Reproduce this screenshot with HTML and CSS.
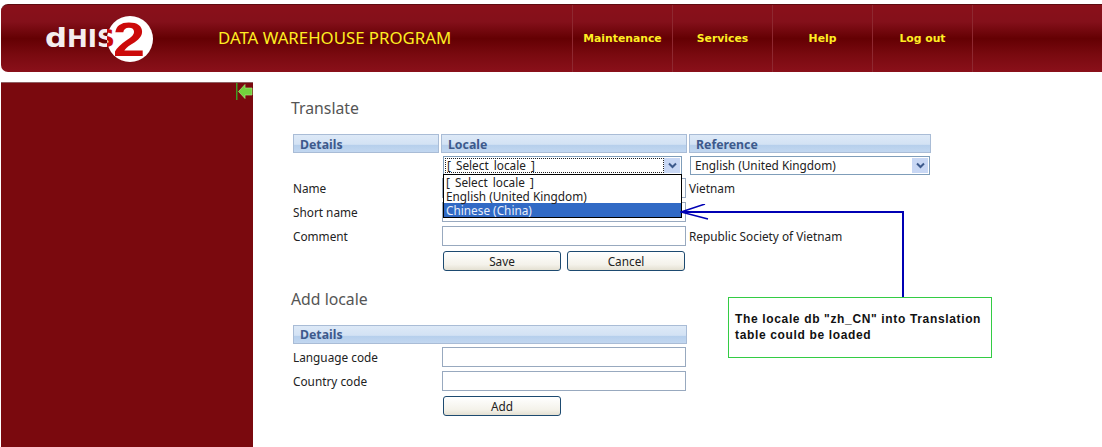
FILE: index.html
```html
<!DOCTYPE html>
<html>
<head>
<meta name="viewport" content="width=device-width, initial-scale=1">
<link rel="stylesheet" href="styles.css">
</head>
<body>

<div class="header">
  <svg class="logo" width="120" height="50" viewBox="0 0 120 50">
    <defs>
      <linearGradient id="sCut" gradientUnits="userSpaceOnUse" x1="50" y1="0" x2="72" y2="0">
        <stop offset="0.55" stop-color="#f4eeee"/>
        <stop offset="0.55" stop-color="#cc0a0a"/>
      </linearGradient>
    </defs>
    <circle cx="85" cy="25" r="23" fill="#fff"/>
    <text x="0" y="33" class="logo-d" textLength="22" lengthAdjust="spacingAndGlyphs">d</text>
    <text x="22" y="33" class="logo-his" textLength="48" lengthAdjust="spacingAndGlyphs">HI<tspan fill="url(#sCut)">S</tspan></text>
    <text x="68" y="42" class="logo-two" textLength="32" lengthAdjust="spacingAndGlyphs">2</text>
  </svg>
  <div class="app-title">DATA WAREHOUSE PROGRAM</div>
  <div class="menu">
    <a class="menu-item">Maintenance</a>
    <a class="menu-item">Services</a>
    <a class="menu-item">Help</a>
    <a class="menu-item">Log out</a>
    <span class="menu-rest"></span>
  </div>
</div>

<div class="page">
  <div class="sidebar">
    <svg class="hide-arrow" width="17" height="17" viewBox="0 0 17 17">
      <rect x="0" y="0" width="1.500" height="17" fill="#3f9a22"/>
      <path d="M2.500 8.500 L9 1.500 V5 H16 V12 H9 V15.500 Z" fill="#72d23c" stroke="#a4e67c" stroke-width="0.7"/>
    </svg>
  </div>

  <div class="main">
    <h3 class="heading">Translate</h3>
    <div class="form-grid">
      <div class="section-head">Details</div>
      <div class="section-head">Locale</div>
      <div class="section-head">Reference</div>

      <div></div>
      <div class="select select-focus">
        <span class="select-value wide-words">[ Select locale ]</span>
        <span class="select-btn"><svg width="9" height="7" viewBox="0 0 9 7"><path d="M1 1.500 L4.500 5 L8 1.500" fill="none" stroke="#3d5a8c" stroke-width="2"/></svg></span>
      </div>
      <div class="select select-ref">
        <span class="select-value">English (United Kingdom)</span>
        <span class="select-btn"><svg width="9" height="7" viewBox="0 0 9 7"><path d="M1 1.500 L4.500 5 L8 1.500" fill="none" stroke="#3d5a8c" stroke-width="2"/></svg></span>
      </div>

      <div class="label">Name</div>
      <div class="text-input"></div>
      <div class="ref-text">Vietnam</div>

      <div class="label">Short name</div>
      <div class="text-input"></div>
      <div class="ref-text"></div>

      <div class="label">Comment</div>
      <div class="text-input"></div>
      <div class="ref-text">Republic Society of Vietnam</div>

      <div></div>
      <div class="buttons">
        <span class="btn">Save</span>
        <span class="btn">Cancel</span>
      </div>
    </div>

    <h3 class="heading heading-add">Add locale</h3>
    <div class="form-grid form-add">
      <div class="section-head section-wide">Details</div>

      <div class="label">Language code</div>
      <div class="text-input"></div>

      <div class="label">Country code</div>
      <div class="text-input"></div>

      <div></div>
      <div class="buttons">
        <span class="btn">Add</span>
      </div>
    </div>
  </div>
</div>

<ul class="dropdown">
  <li class="wide-words">[ Select locale ]</li>
  <li>English (United Kingdom)</li>
  <li class="selected">Chinese (China)</li>
</ul>

<svg class="pointer" width="240" height="100" viewBox="0 0 240 100">
  <path d="M223 93 V8 H1" fill="none" stroke="#0000b4" stroke-width="2"/>
  <path d="M25 0 L1 8 L28 15" fill="none" stroke="#0000b4" stroke-width="1.500"/>
</svg>

<div class="callout">The locale db "zh_CN" into Translation table could be loaded</div>

</body>
</html>
```

FILE: styles.css
```css
* {
  box-sizing: border-box;
}

body {
  margin: 0;
  height: 447px;
  overflow: hidden;
  background: #fff;
  font-family: "Noto Sans", sans-serif;
  font-size: 11.800px;
  color: #222;
  position: relative;
}

/* top bar */
.header {
  margin: 4px 0 0 1px;
  height: 68px;
  display: flex;
  align-items: center;
  border-top: 1px solid #5e0a10;
  border-radius: 7px 0 0 7px;
  background: linear-gradient(#8a101a 0%, #84101a 25%, #640003 50%, #7a0a10 75%, #8a101a 100%);
}

.logo {
  margin-left: 44px;
  flex: none;
}

.logo-d {
  font-family: "DejaVu Sans", sans-serif;
  font-weight: bold;
  font-size: 26px;
  fill: #f4eeee;
}

.logo-his {
  font-family: "DejaVu Sans", sans-serif;
  font-weight: bold;
  font-size: 24px;
  fill: #f4eeee;
}

.logo-two {
  font-family: "Liberation Sans", sans-serif;
  font-weight: bold;
  font-size: 48px;
  fill: #cc0a0a;
}

.app-title {
  margin-left: 53px;
  width: 354px;
  flex: none;
  padding-bottom: 2px;
  font-size: 16.800px;
  color: #ffee22;
}

.menu {
  display: flex;
  height: 100%;
}

.menu-item {
  width: 100px;
  display: flex;
  align-items: center;
  justify-content: center;
  border-left: 1px solid #8e2830;
  font-family: "DejaVu Sans", sans-serif;
  font-size: 10.800px;
  font-weight: bold;
  color: #ffee22;
}

.menu-rest {
  width: 130px;
  border-left: 1px solid #8e2830;
}

/* page */
.page {
  display: flex;
  margin-top: 10px;
  height: 365px;
}

.sidebar {
  margin-left: 1px;
  width: 252px;
  flex: none;
  display: flex;
  justify-content: flex-end;
  align-items: flex-start;
  background: #7a090e;
  border-top: 1px solid #8f5f62;
}

.main {
  padding-left: 38px;
}

.heading {
  margin: 16px 0 16px;
  font-size: 15.800px;
  line-height: 20px;
  font-weight: normal;
  color: #555;
}

.heading-add {
  margin: 18px 0 16px;
}

.form-grid {
  margin-left: 2px;
  display: grid;
  grid-template-columns: 146px 246px 242px;
  column-gap: 2px;
  align-items: center;
}

.form-add {
  grid-template-columns: 146px 246px;
}

.section-head {
  height: 19px;
  padding-left: 6px;
  line-height: 19px;
  margin-bottom: 3px;
  border: 1px solid #a9bcd6;
  background: linear-gradient(#dde9f7 0%, #d3e2f4 55%, #b6cfec 60%, #c2d7f0 100%);
  font-weight: bold;
  font-size: 12.300px;
  color: #3d5a8c;
}

.section-wide {
  grid-column: 1 / 3;
  line-height: 17px;
}

.select {
  height: 19px;
  margin: 0 5px 3px 2px;
  display: flex;
  align-items: center;
  justify-content: space-between;
  padding: 1px;
  border: 1px solid #7f9db9;
}

.select-ref {
  margin: 0 1px 3px 1px;
}

.select-value {
  padding-left: 3px;
  line-height: 15px;
}

.select-focus .select-value {
  flex: 1;
  border: 1px dotted #222;
  padding-left: 1px;
  height: 15px;
  line-height: 13px;
}

.wide-words {
  word-spacing: 2px;
}

.select-btn {
  width: 16px;
  height: 15px;
  flex: none;
  display: flex;
  align-items: center;
  justify-content: center;
  background: #c8d7f4;
}

.label {
  height: 24px;
  line-height: 21px;
}

.text-input {
  height: 20px;
  margin: 0 1px 4px 1px;
  border: 1px solid #98a9bf;
  background: #fff;
}

.ref-text {
  height: 24px;
  line-height: 21px;
}

.buttons {
  display: flex;
  gap: 6px;
  margin: 1px 0 0 2px;
}

.btn {
  width: 118px;
  height: 20px;
  text-align: center;
  line-height: 19px;
  border: 1px solid #1d4a70;
  border-radius: 3px;
  background: linear-gradient(#fff, #f4f2ea 70%, #e4e0d2);
}

/* open list of the locale select */
.dropdown {
  position: absolute;
  left: 443px;
  top: 174px;
  width: 239px;
  margin: 0;
  padding: 0;
  list-style: none;
  background: #fff;
  border: 1px solid #000;
}

.dropdown li {
  height: 14px;
  line-height: 14px;
  padding-left: 2px;
}

.dropdown .selected {
  background: #316ac5;
  color: #e8eefa;
}

/* annotation over the form */
.pointer {
  position: absolute;
  left: 680px;
  top: 204px;
}

.callout {
  position: absolute;
  left: 728px;
  top: 297px;
  width: 264px;
  height: 61px;
  padding: 13px 6px;
  border: 1px solid #33cc44;
  background: #fff;
  font-family: "Liberation Sans", sans-serif;
  font-size: 12px;
  font-weight: bold;
  line-height: 16px;
  letter-spacing: 0.65px;
  color: #111;
}
```
